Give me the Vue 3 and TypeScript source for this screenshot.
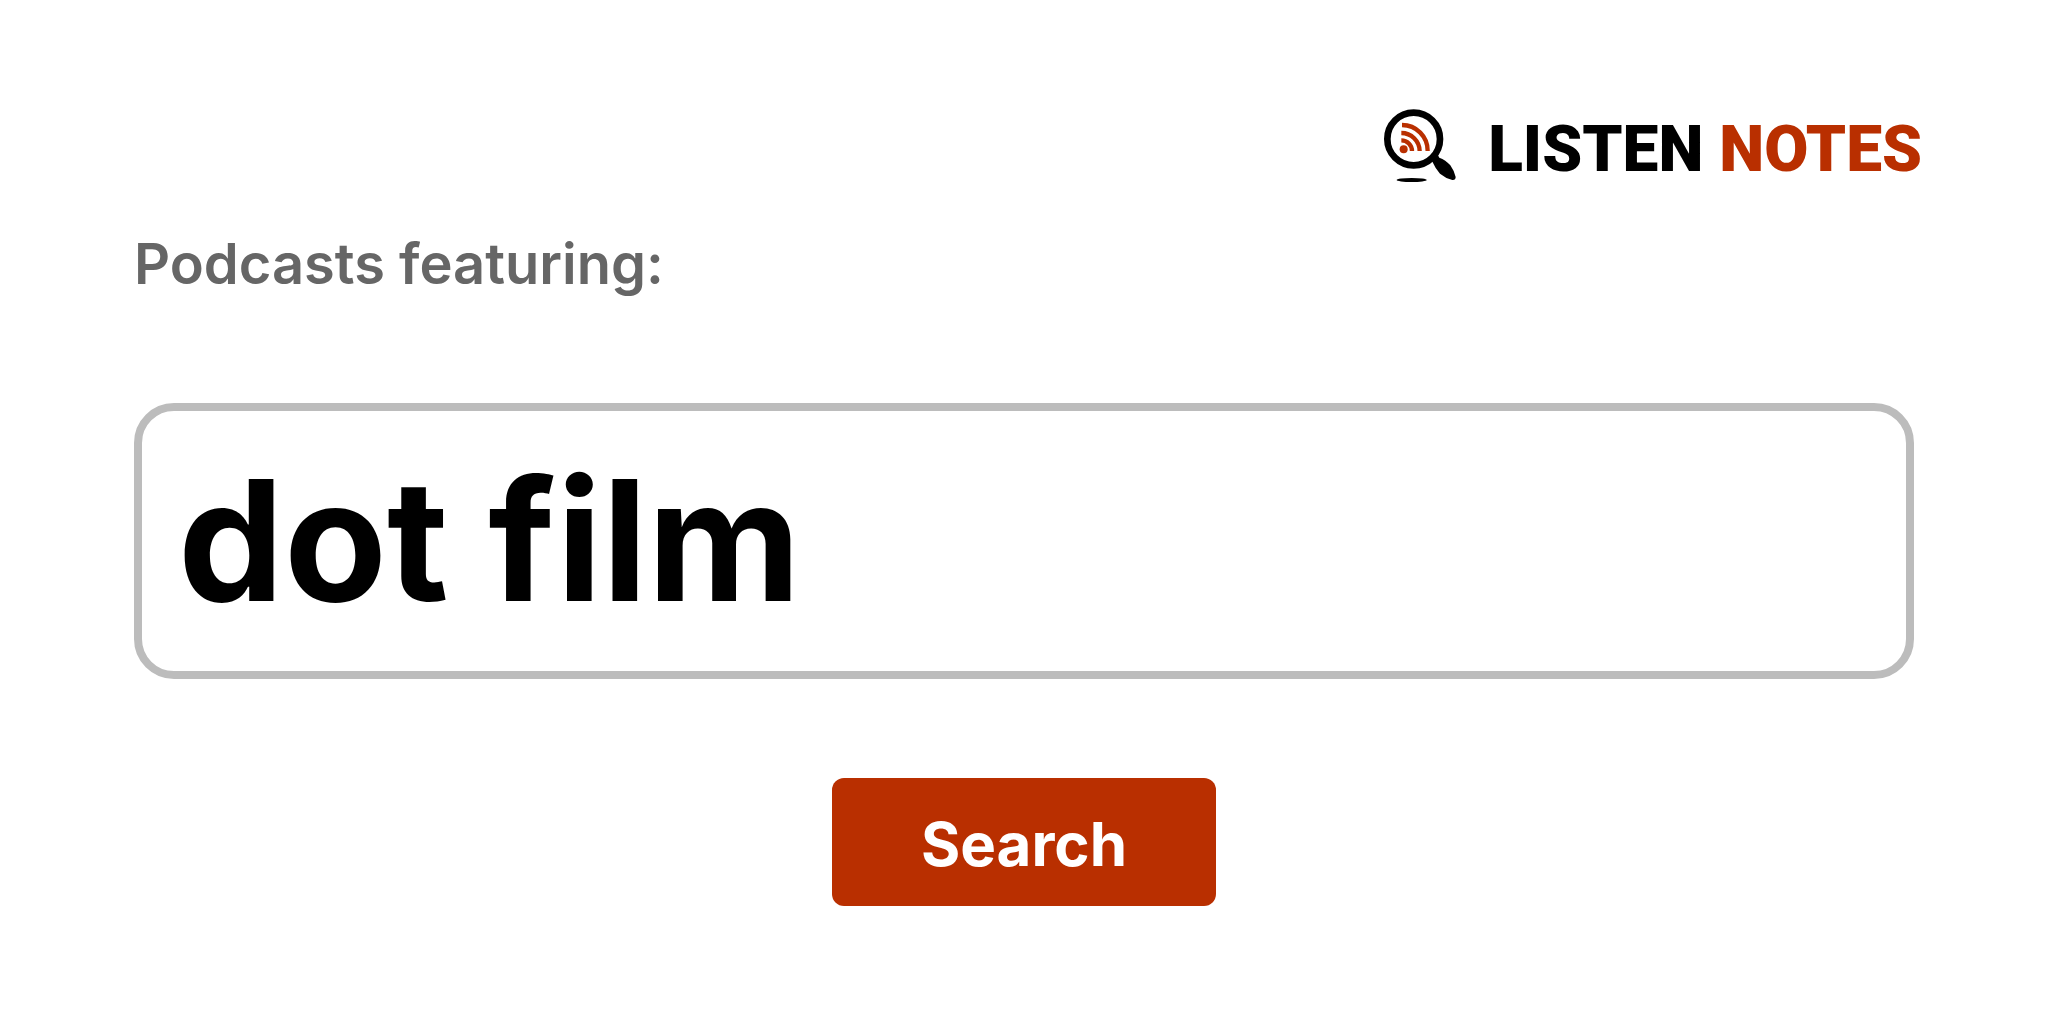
<script setup lang="ts">
import { ref } from 'vue'

const query = ref<string>('dot film')
</script>

<template>
  <main class="page">
    <header class="brand">
      <a class="brand-link" href="#" aria-label="Listen Notes">
        <svg class="brand-icon" viewBox="0 0 300 270" aria-hidden="true">
          <circle cx="131" cy="117" r="79" fill="#fff" stroke="#000" stroke-width="20" />
          <path d="M183 180 L202 162 L208 173 Q227 180 241 196 Q253 213 257 231 Q257 241 247 240 Q227 235 210 221 Q196 206 188 187 Z" fill="#000" />
          <ellipse cx="125" cy="240" rx="45" ry="6" fill="#000" />
          <circle cx="101" cy="148" r="12" fill="#b92f00" />
          <g fill="none" stroke="#b92f00" stroke-width="13">
            <path d="M96 75 A77 77 0 0 1 173 153" />
            <path d="M94 99 A55 55 0 0 1 149 153" />
            <path d="M94 121 A32 32 0 0 1 126 153" />
          </g>
        </svg>
        <span class="brand-name">LISTEN <span class="accent">NOTES</span></span>
      </a>
    </header>
    <form class="search" @submit.prevent>
      <label class="label" for="query">Podcasts featuring:</label>
      <input id="query" v-model="query" class="field" type="text" autocomplete="off" />
      <button class="submit" type="submit">Search</button>
    </form>
  </main>
</template>

<style>
body {
  margin: 0;
  background: #fff;
}
</style>

<style scoped>
.page {
  padding: 100px 134px 118px;
  font-family: Inter, "Liberation Sans", sans-serif;
}

.brand {
  display: flex;
  justify-content: flex-end;
  margin-right: -8px;
}

.brand-link {
  display: flex;
  align-items: center;
  gap: 18px;
  color: #000;
  text-decoration: none;
}

.brand-icon {
  width: 100px;
  height: 90px;
}

.brand-name {
  padding-top: 10px;
  font-family: Roboto, "Liberation Sans", sans-serif;
  font-size: 64px;
  font-weight: 900;
  line-height: 80px;
  white-space: nowrap;
}

.accent {
  color: #b92f00;
}

.search {
  display: flex;
  flex-direction: column;
}

.label {
  margin-top: 40px;
  color: #666;
  font-size: 56px;
  font-weight: 600;
  line-height: 68px;
}

.field {
  box-sizing: border-box;
  width: 100%;
  height: 276px;
  margin-top: 105px;
  padding: 0 36px 2px;
  border: 8px solid #bcbcbc;
  border-radius: 40px;
  outline: none;
  background: #fff;
  color: #000;
  font-family: inherit;
  font-size: 168px;
  font-weight: 700;
}

.submit {
  align-self: center;
  width: 384px;
  height: 128px;
  margin-top: 99px;
  padding: 4px 0 0;
  border: 0;
  border-radius: 12px;
  background: #b92f00;
  color: #fff;
  font-family: inherit;
  font-size: 60px;
  font-weight: 700;
  cursor: pointer;
}
</style>
